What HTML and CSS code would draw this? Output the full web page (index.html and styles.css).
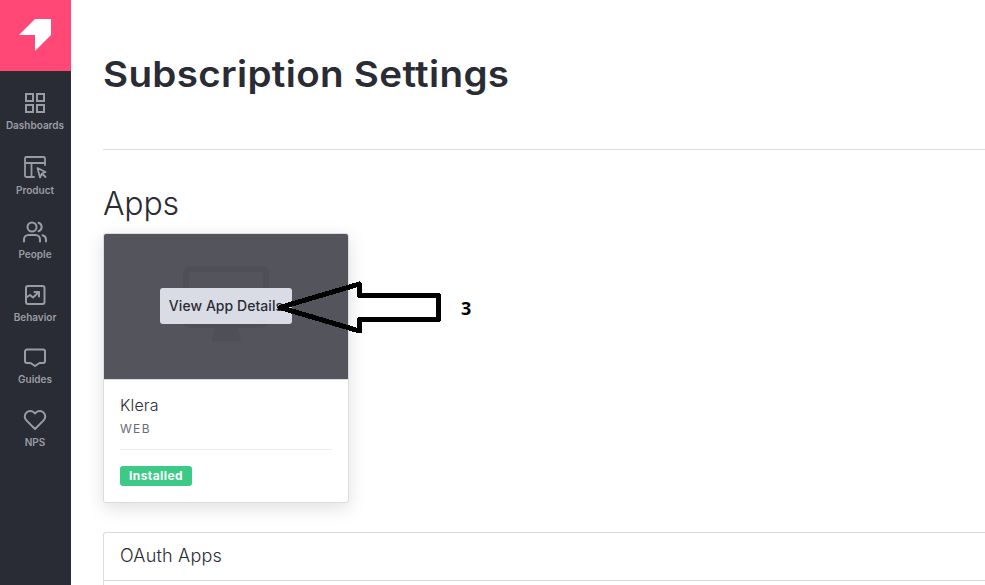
FILE: index.html
```html
<!DOCTYPE html>
<html lang="en">
<head>
<meta charset="utf-8">
<title>Subscription Settings</title>
<link rel="stylesheet" href="styles.css">
</head>
<body>
<div class="layout">
  <aside class="sidebar">
    <div class="logo">
      <svg width="71" height="71" viewBox="0 0 71 71"><path d="M35 19H51V35L35 51V35H19Z" fill="#fff"/></svg>
    </div>
    <nav class="nav">
      <a class="nav-item"><svg class="icon" viewBox="0 0 24 24"><path d="M3 3h7v7H3zM14 3h7v7h-7zM3 14h7v7H3zM14 14h7v7h-7z" stroke-linejoin="miter"/></svg><span>Dashboards</span></a>
      <a class="nav-item product"><svg class="icon" viewBox="0 0 24 24"><path d="M11 22H3.500a1.500 1.500 0 0 1-1.500-1.500V3.500A1.500 1.500 0 0 1 3.500 2h17A1.500 1.500 0 0 1 22 3.500V10M2 8h20M8.500 8v14M14.500 13l8 4-3.500 1.500-2 4zM19.500 19l3 3" stroke-width="1.800"/></svg><span>Product</span></a>
      <a class="nav-item"><svg class="icon" viewBox="0 0 24 24"><path d="M17 21.500v-2a4.500 4.500 0 0 0-4.500-4.500h-7A4.500 4.500 0 0 0 1 19.500v2M23 21.500v-2a4.500 4.500 0 0 0-3.500-4.300M15.500 2.700a4.500 4.500 0 0 1 0 8.600"/><circle cx="9" cy="7" r="4.500"/></svg><span>People</span></a>
      <a class="nav-item"><svg class="icon" viewBox="0 0 24 24"><rect x="3" y="3" width="18.500" height="18" rx="2"/><path d="M4 14l3-2 3 2.500 6-5.500M11.500 9H16v4.500"/></svg><span>Behavior</span></a>
      <a class="nav-item"><svg class="icon" viewBox="0 0 24 24"><path d="M4 4.500h16a2 2 0 0 1 2 2V16a2 2 0 0 1-2 2h-3.500L12 21l-4.500-3H4a2 2 0 0 1-2-2V6.500a2 2 0 0 1 2-2z"/></svg><span>Guides</span></a>
      <a class="nav-item"><svg class="icon" viewBox="0 0 24 24"><path d="M20.600 4.600a5.500 5.500 0 0 0-7.800 0L12 5.500l-.8-.9a5.500 5.500 0 0 0-7.800 7.800L12 21l8.600-8.600a5.500 5.500 0 0 0 0-7.800z"/></svg><span>NPS</span></a>
    </nav>
  </aside>
  <main class="main">
    <header class="page-header"><h1>Subscription Settings</h1></header>
    <h2>Apps</h2>
    <article class="card">
      <div class="preview">
        <svg class="monitor" width="86" height="76" viewBox="0 0 86 76"><rect x="3" y="3" width="80" height="56" rx="4" fill="none" stroke="#4f4f58" stroke-width="6"/><path d="M32 62H54L58 72Q58 75 55 75H31Q28 75 29 72Z" fill="#4f4f58"/></svg>
        <button class="details">View App Details</button>
      </div>
      <div class="card-body">
        <div class="app-name">Klera</div>
        <div class="platform">WEB</div>
        <div class="status"><span class="badge">Installed</span></div>
      </div>
    </article>
    <section class="panel"><h3>OAuth Apps</h3></section>
  </main>
</div>
<div class="callout">
  <svg width="166" height="54" viewBox="0 0 166 54" shape-rendering="crispEdges"><path d="M5 27.500L84.500 4V15.500H163.500V39.500H84.500V51Z" fill="none" stroke="#000" stroke-width="5" stroke-linejoin="round"/></svg>
  <span>3</span>
</div>
</body>
</html>
```

FILE: styles.css
```css
* { box-sizing: border-box; }
body {
  margin: 0;
  background: #fff;
  color: #2a2c35;
  font-family: Inter, "Liberation Sans", sans-serif;
  overflow: hidden;
}
h1, h2, h3 { margin: 0; }
.layout { display: flex; height: 585px; }
.sidebar { width: 71px; flex: none; background: #2a2c35; }
.logo { height: 71px; background: #ff4876; }
.logo svg { display: block; }
.nav {
  display: grid;
  grid-template-rows: 64px 65px 63px 62px 63px 40px;
  padding-top: 20px;
}
.nav-item {
  display: flex;
  flex-direction: column;
  align-items: center;
  gap: 4px;
  color: #9a9ca5;
  font-size: 10px;
  font-weight: 600;
  line-height: 13px;
}
.nav-item span { margin-left: -1px; }
.product { gap: 5px; }
.icon {
  width: 24px;
  height: 24px;
  margin-left: -1px;
  overflow: visible;
  fill: none;
  stroke: currentColor;
  stroke-width: 2;
  stroke-linecap: round;
  stroke-linejoin: round;
}
.main { flex: 1; min-width: 0; padding-left: 32px; }
.page-header {
  height: 150px;
  padding-top: 50px;
  border-bottom: 1px solid #dadce5;
}
h1 {
  width: max-content;
  font-size: 36px;
  line-height: 48px;
  font-weight: 600;
  letter-spacing: .3px;
  transform: scaleX(1.071);
  transform-origin: left;
}
h2 { margin-top: 34px; font-size: 32px; line-height: 40px; font-weight: 300; letter-spacing: -.2px; }
.card {
  width: 246px;
  height: 270px;
  margin-top: 9px;
  border: 1px solid #dadce5;
  border-radius: 3px;
  background: #fff;
  box-shadow: 0 5px 18px rgba(0, 0, 0, .13);
}
.preview {
  position: relative;
  display: flex;
  align-items: center;
  justify-content: center;
  height: 146px;
  padding-bottom: 1px;
  background: #54545d;
  border-bottom: 1px solid #dadce5;
  border-radius: 2px 2px 0 0;
}
.monitor { position: absolute; left: 79px; top: 32px; }
.details {
  position: relative;
  width: 132px;
  height: 36px;
  padding: 0;
  border: 0;
  border-radius: 3px;
  background: #dadce5;
  color: #2a2c35;
  font: 550 14px/36px Inter, sans-serif;
  letter-spacing: .05px;
  white-space: nowrap;
}
.card-body { padding: 14px 16px; }
.app-name { font-size: 16px; line-height: 22px; font-weight: 350; letter-spacing: .15px; }
.platform { margin-top: 4px; font-size: 12px; line-height: 18px; font-weight: 400; letter-spacing: 1.3px; color: #6a6c75; }
.status { margin-top: 11px; padding-top: 16px; border-top: 1px solid #eaecf1; }
.badge {
  display: block;
  width: 72px;
  height: 20px;
  border-radius: 3px;
  background: #3dca87;
  color: #fff;
  font-size: 12px;
  line-height: 20px;
  font-weight: 700;
  letter-spacing: .4px;
  text-align: center;
}
.panel {
  height: 60px;
  margin-top: 29px;
  border: solid #dadce5;
  border-width: 1px 0 0 1px;
  border-radius: 3px 0 0;
}
h3 {
  height: 48px;
  padding-left: 16px;
  border-bottom: 1px solid #dadce5;
  font-size: 18px;
  line-height: 46px;
  font-weight: 350;
  letter-spacing: .2px;
}
.callout {
  position: absolute;
  left: 275px;
  top: 280px;
  display: flex;
  align-items: flex-start;
  gap: 20px;
  color: #000;
  font: 700 18px/56px "Open Sans", sans-serif;
}
.callout svg { display: block; }
```
